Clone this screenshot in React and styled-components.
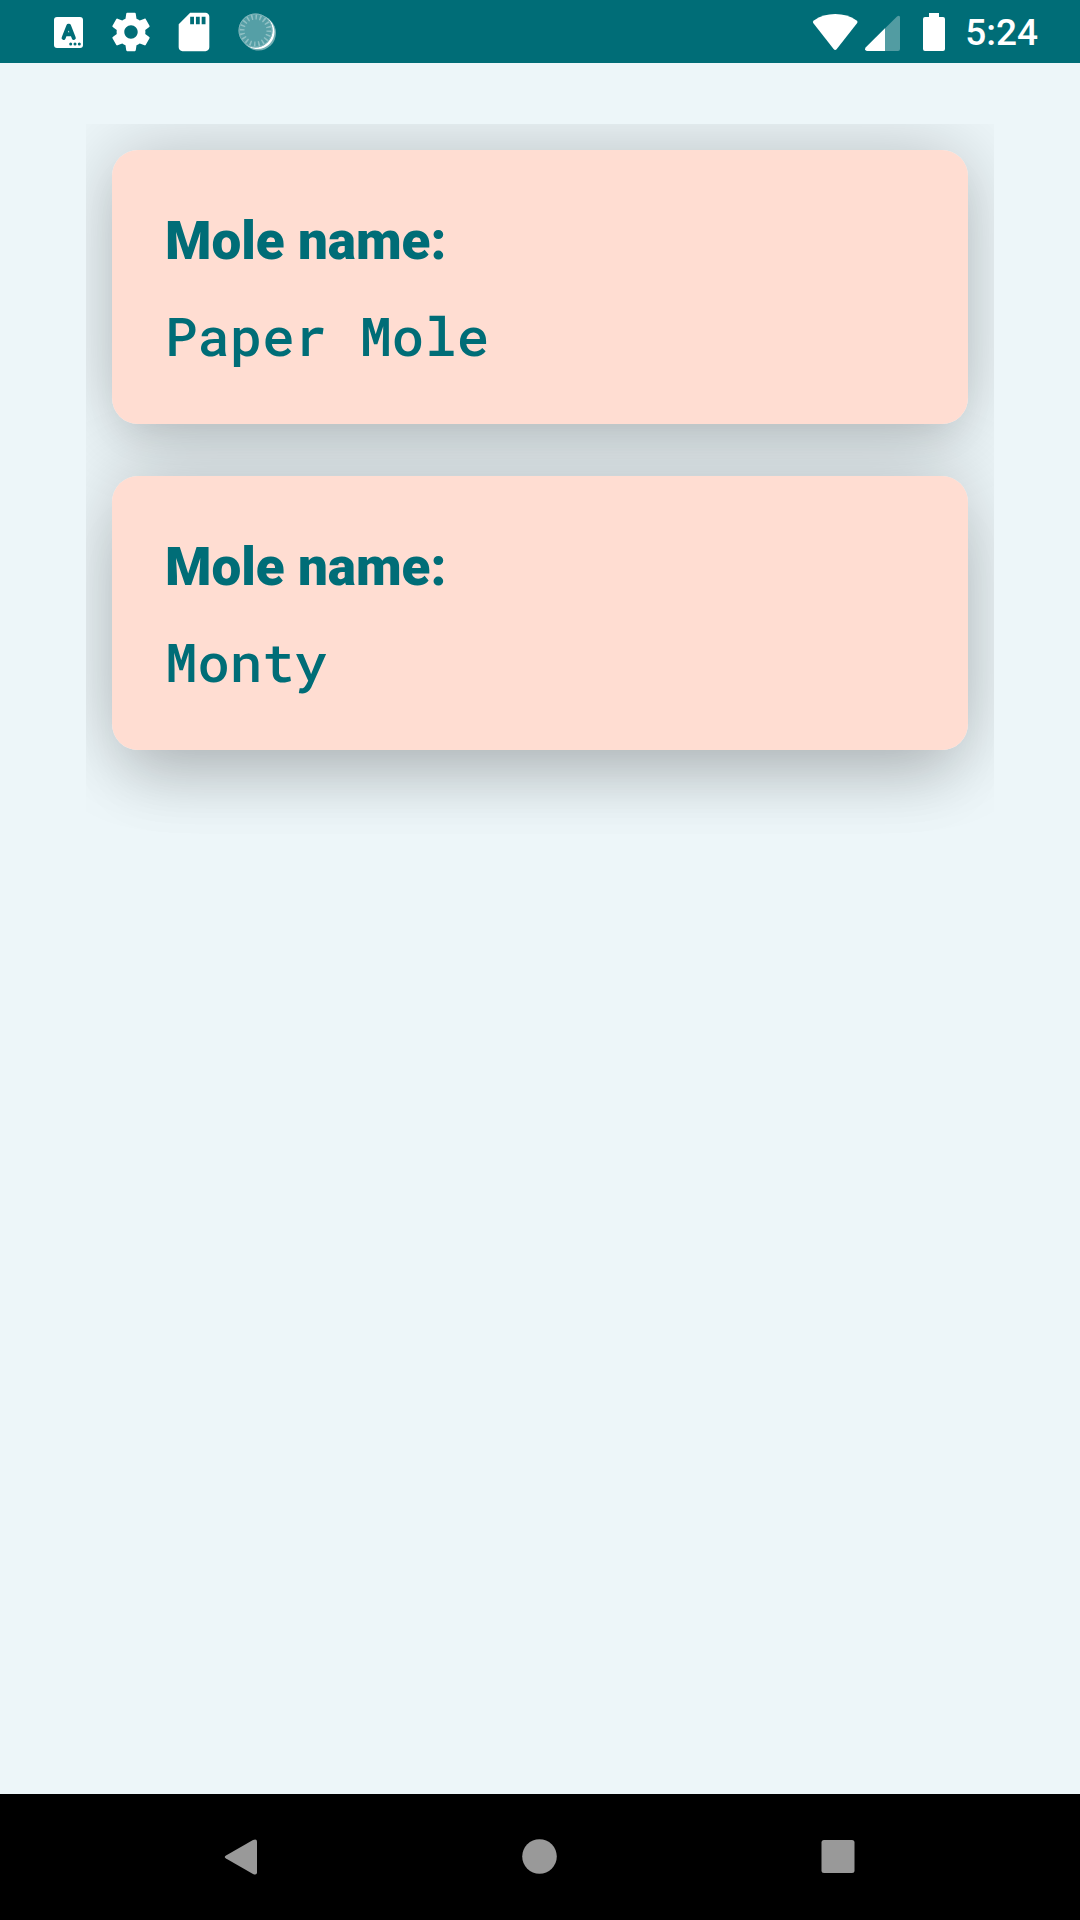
import React from "react";
import styled, { createGlobalStyle } from "styled-components";

const GlobalStyle = createGlobalStyle`
  * { box-sizing: border-box; }
  body { margin: 0; background: #edf6f9; font-family: Roboto, sans-serif; }
`;

const Screen = styled.div`
  display: flex;
  flex-direction: column;
  height: 100vh;
  background: #edf6f9;
  color: #006d77;
`;

const StatusBar = styled.header`
  display: flex;
  justify-content: space-between;
  align-items: center;
  flex: none;
  height: 63px;
  padding: 0 42px 0 45px;
  background: #006d77;
  color: #fff;
`;

const Notifications = styled.div`
  display: flex;
  align-items: center;
  gap: 17px;
`;

const SystemStatus = styled.div`
  display: flex;
  align-items: center;
`;

const Glyph = styled.svg`
  display: block;
  flex: none;
  width: ${(p) => p.$width || 46}px;
  height: 46px;
  fill: currentColor;
`;

const Clock = styled.time`
  margin-left: 14px;
  padding-top: 2px;
  font-size: 37px;
  font-weight: 500;
  line-height: 46px;
`;

const Content = styled.main`
  display: flex;
  flex: 1;
  min-height: 0;
  padding: 61px 86px 0;
`;

const MoleList = styled.ul`
  display: flex;
  flex: 1;
  flex-direction: column;
  gap: 52px;
  margin: 0;
  padding: 26px;
  overflow: hidden;
  isolation: isolate;
  list-style: none;
`;

/* The shadow sits on its own layer so it never tints a neighbouring card. */
const MoleCard = styled.li`
  position: relative;
  display: flex;
  flex-direction: column;
  gap: 20px;
  padding: 53px;
  border-radius: 26px;
  background: #ffddd2;

  &::before {
    content: "";
    position: absolute;
    inset: 0;
    z-index: -1;
    border-radius: inherit;
    box-shadow:
      0 4px 80px rgba(0, 0, 0, 0.24),
      0 20px 40px -12px rgba(0, 0, 0, 0.09);
  }

  &:last-child::before {
    box-shadow:
      0 4px 80px rgba(0, 0, 0, 0.24),
      0 48px 60px -16px rgba(0, 0, 0, 0.11);
  }
`;

const Label = styled.h2`
  margin: 0;
  font-size: 53px;
  font-weight: 900;
  line-height: 76px;
`;

const Name = styled.p`
  margin: 0;
  font-family: "Roboto Mono", "DejaVu Sans Mono", monospace;
  font-size: 54px;
  font-weight: 500;
  line-height: 72px;
`;

const NavBar = styled.nav`
  display: grid;
  grid-template-columns: repeat(3, 1fr);
  flex: none;
  height: 126px;
  padding: 0 92px;
  background: #000;
`;

const NavButton = styled.button`
  display: flex;
  align-items: center;
  justify-content: center;
  padding: 0;
  border: 0;
  background: none;
  color: #999;
`;

const moles = ["Paper Mole", "Monty"];

function StatusIcons() {
  return (
    <Notifications>
      <Glyph viewBox="0 0 46 46" aria-hidden="true">
        <rect x="9" y="8" width="29" height="31" rx="3" />
        <g fill="none" stroke="#006d77" strokeWidth="4" strokeLinecap="round" strokeLinejoin="round">
          <path d="M18.6 29 L23.4 16.7 H24 L28.8 29 M20.5 25.3 H27" />
        </g>
        <g fill="#006d77">
          <circle cx="25.7" cy="35" r="1.5" />
          <circle cx="30" cy="35" r="1.5" />
          <circle cx="34.3" cy="35" r="1.5" />
        </g>
      </Glyph>
      <Glyph viewBox="0 0 24 24" aria-hidden="true">
        <path d="M19.43 12.98c.04-.32.07-.64.07-.98s-.03-.66-.07-.98l2.11-1.65c.19-.15.24-.42.12-.64l-2-3.46c-.12-.22-.39-.3-.61-.22l-2.49 1c-.52-.4-1.08-.73-1.69-.98l-.38-2.65C14.46 2.18 14.25 2 14 2h-4c-.25 0-.46.18-.49.42l-.38 2.65c-.61.25-1.17.59-1.69.98l-2.49-1c-.23-.09-.49 0-.61.22l-2 3.46c-.13.22-.07.49.12.64l2.11 1.65c-.04.32-.07.65-.07.98s.03.66.07.98l-2.11 1.65c-.19.15-.24.42-.12.64l2 3.46c.12.22.39.3.61.22l2.49-1c.52.4 1.08.73 1.69.98l.38 2.65c.03.24.24.42.49.42h4c.25 0 .46-.18.49-.42l.38-2.65c.61-.25 1.17-.59 1.69-.98l2.49 1c.23.09.49 0 .61-.22l2-3.46c.12-.22.07-.49-.12-.64l-2.11-1.65zM12 15.5c-1.93 0-3.5-1.57-3.5-3.5s1.57-3.5 3.5-3.5 3.5 1.57 3.5 3.5-1.57 3.5-3.5 3.5z" />
      </Glyph>
      <Glyph viewBox="0 0 24 24" aria-hidden="true">
        <path d="M18 2h-8L4.02 8 4 20c0 1.1.9 2 2 2h12c1.1 0 2-.9 2-2V4c0-1.1-.9-2-2-2zm-6 6h-2V4h2v4zm3 0h-2V4h2v4zm3 0h-2V4h2v4z" />
      </Glyph>
      <Glyph viewBox="0 0 46 46" aria-hidden="true">
        <circle cx="24.5" cy="24" r="17.5" opacity=".45" />
        <circle cx="23.5" cy="23" r="17" />
        <circle cx="21.5" cy="21.5" r="17" fill="#559fa6" />
        <circle
          cx="21.5"
          cy="21.5"
          r="13.5"
          fill="none"
          stroke="#8fc0c4"
          strokeWidth="5"
          pathLength="100"
          strokeDasharray="1.8 3.2"
        />
        <circle cx="21.5" cy="21.5" r="16.5" fill="none" stroke="#7fb6bb" />
      </Glyph>
    </Notifications>
  );
}

export default function App() {
  return (
    <>
      <GlobalStyle />
      <Screen>
        <StatusBar>
          <StatusIcons />
          <SystemStatus>
            <Glyph $width={53} viewBox="0 0 53 46" aria-hidden="true">
              <path d="M1.2 14 Q0.2 12.5 1.8 11.4 Q11.2 5 23.2 5 T44.6 11.4 Q46.2 12.5 45.2 14 L24.8 40 Q23.2 41.8 21.6 40 Z" />
            </Glyph>
            <Glyph $width={52} viewBox="0 0 52 46" aria-hidden="true">
              <path d="M0.7 38.5 L32 7.4 Q35 5.5 35 8.5 V40 Q35 42 33 42 H2 Q-1 41.5 .7 38.5Z" opacity=".32" />
              <path d="M0.7 38.5 L20 19.3 V42 H2 Q-1 41.5 .7 38.5Z" />
            </Glyph>
            <Glyph $width={34} viewBox="0 0 34 46" aria-hidden="true">
              <path d="M12 4 h10 v4 h4 q2 0 2 2 v30 q0 2 -2 2 h-18 q-2 0 -2 -2 v-30 q0 -2 2 -2 h4z" />
            </Glyph>
            <Clock>5:24</Clock>
          </SystemStatus>
        </StatusBar>
        <Content>
          <MoleList>
            {moles.map((name) => (
              <MoleCard key={name}>
                <Label>Mole name:</Label>
                <Name>{name}</Name>
              </MoleCard>
            ))}
          </MoleList>
        </Content>
        <NavBar>
          <NavButton type="button" aria-label="Back">
            <Glyph viewBox="0 0 46 46">
              <path d="M8 21.4 L35 6 Q39 4.3 39 7.8 V38.2 Q39 41.7 35 40 L8 24.6 Q5.5 23 8 21.4Z" />
            </Glyph>
          </NavButton>
          <NavButton type="button" aria-label="Home">
            <Glyph viewBox="0 0 46 46">
              <circle cx="22.5" cy="22.5" r="17.3" />
            </Glyph>
          </NavButton>
          <NavButton type="button" aria-label="Overview">
            <Glyph viewBox="0 0 46 46">
              <rect x="5.5" y="6" width="33" height="33" rx="2.5" />
            </Glyph>
          </NavButton>
        </NavBar>
      </Screen>
    </>
  );
}
